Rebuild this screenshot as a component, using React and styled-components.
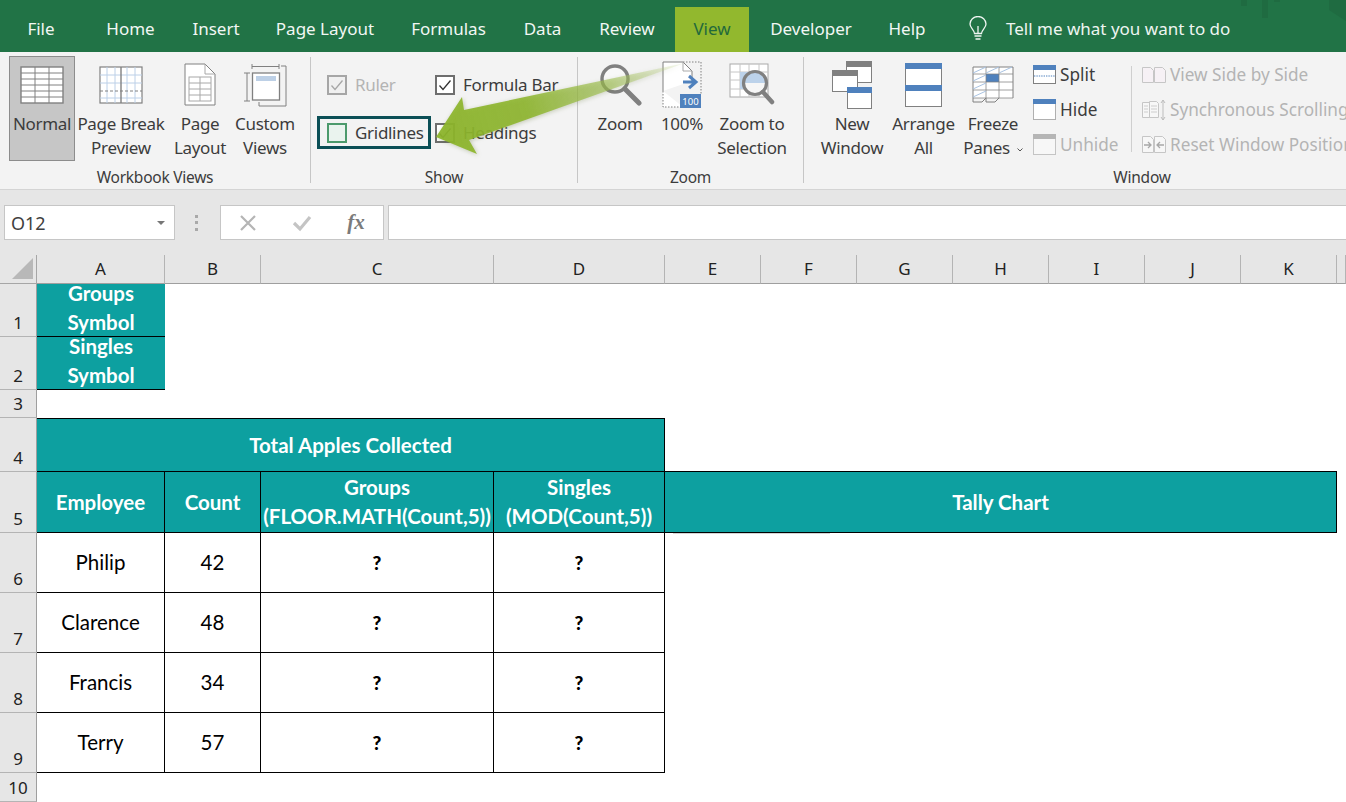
import styled, { createGlobalStyle } from "styled-components";

const GlobalStyle = createGlobalStyle`
  html, body {
    margin: 0;
    padding: 0;
    background: #fff;
  }
`;

const uiFont = `"Noto Sans", "Open Sans", sans-serif`;
const cellFont = `Lato, "Liberation Sans", sans-serif`;

const Page = styled.div`
  position: relative;
  width: 1346px;
  height: 802px;
  overflow: hidden;
  font-family: ${uiFont};
  background: #fff;
`;

/* tab strip */
const TabBar = styled.div`
  position: relative;
  display: flex;
  height: 52px;
  padding-top: 7px;
  box-sizing: border-box;
  background: #217346;
`;
const Tab = styled.div`
  width: ${(p) => p.$w}px;
  margin-left: ${(p) => p.$gap || 0}px;
  display: flex;
  align-items: center;
  justify-content: center;
  padding-bottom: 3px;
  font-size: 17px;
  color: ${(p) => (p.$active ? "#22693c" : "#f2f7f4")};
  background: ${(p) => (p.$active ? "#92b82e" : "transparent")};
`;
const TellMe = styled.div`
  display: flex;
  align-items: center;
  gap: 19px;
  margin-left: 28px;
  padding-bottom: 3px;
  font-size: 17px;
  color: #eef5f1;
`;
const Watermark = styled.svg`
  position: absolute;
  top: 0;
  right: 0;
`;

/* ribbon */
const Ribbon = styled.div`
  display: flex;
  height: 138px;
  box-sizing: border-box;
  overflow: hidden;
  background: #f3f3f3;
  border-bottom: 1px solid #d4d4d4;
`;
const Group = styled.section`
  flex: 0 0 ${(p) => p.$w}px;
  display: flex;
  flex-direction: column;
`;
const GroupBody = styled.div`
  height: 113px;
  box-sizing: border-box;
  padding: 4px 0 0 ${(p) => p.$pad || 0}px;
  display: flex;
`;
const GroupLabel = styled.div`
  text-align: center;
  font-size: 15.5px;
  line-height: 24px;
  letter-spacing: -0.25px;
  color: #3c3c3c;
`;
const Divider = styled.div`
  flex: 0 0 1px;
  margin: 5px 0 6px;
  background: #c6c6c6;
`;
const BigButton = styled.div`
  width: ${(p) => p.$w}px;
  height: 105px;
  box-sizing: border-box;
  display: flex;
  flex-direction: column;
  align-items: center;
  background: ${(p) => (p.$selected ? "#c6c6c6" : "transparent")};
  border: 1px solid ${(p) => (p.$selected ? "#8c8c8c" : "transparent")};
`;
const IconSlot = styled.div`
  height: 55px;
  flex: none;
  display: flex;
  align-items: center;
  justify-content: center;
`;
const BigLabel = styled.div`
  font-size: 17px;
  line-height: 24px;
  letter-spacing: -0.3px;
  text-align: center;
  white-space: pre-line;
  color: #3c3c3c;
`;
const Chevron = styled.svg`
  margin-left: 7px;
  vertical-align: 2px;
`;

/* show group */
const ShowGrid = styled.div`
  display: grid;
  grid-template-columns: 108px auto;
  grid-auto-rows: 33px;
  row-gap: 15px;
  padding: 12px 0 0 6px;
`;
const CheckItem = styled.div`
  display: flex;
  align-items: center;
  gap: 8px;
  width: 114px;
  height: 33px;
  box-sizing: border-box;
  padding-left: 7px;
  white-space: nowrap;
  border: 3px solid ${(p) => (p.$marked ? "#0b4f56" : "transparent")};
  font-size: 17px;
  letter-spacing: -0.3px;
  color: ${(p) => (p.$muted ? "#b4b4b4" : "#3c3c3c")};
`;
const Box = styled.span`
  flex: none;
  width: 20px;
  height: 20px;
  box-sizing: border-box;
  display: flex;
  align-items: center;
  justify-content: center;
  border: 2px solid ${(p) => p.$line};
  background: ${(p) => p.$fill};
`;

/* small window commands */
const SmallColumn = styled.div`
  flex: 0 0 ${(p) => p.$w}px;
  margin-left: ${(p) => p.$gap}px;
  display: grid;
  grid-auto-rows: 35px;
  padding-top: 1px;
`;
const SmallItem = styled.div`
  display: flex;
  align-items: center;
  gap: ${(p) => p.$gap}px;
  white-space: nowrap;
  font-size: 17.2px;
  color: ${(p) => (p.$muted ? "#b4b4b4" : "#3c3c3c")};
`;
const ThinRule = styled.div`
  flex: 0 0 1px;
  height: 86px;
  margin: 10px 0 0 0;
  background: #cfcfcf;
`;

/* formula bar */
const FormulaRow = styled.div`
  display: flex;
  align-items: center;
  height: 65px;
  padding: 0 0 0 4px;
  background: #e6e6e6;
`;
const NameBox = styled.div`
  width: 171px;
  height: 35px;
  box-sizing: border-box;
  padding: 0 9px 0 6px;
  display: flex;
  align-items: center;
  justify-content: space-between;
  background: #fff;
  border: 1px solid #c6c6c6;
  font-size: 18px;
  color: #3f3f3f;
`;
const Caret = styled.span`
  width: 0;
  height: 0;
  border-left: 4px solid transparent;
  border-right: 4px solid transparent;
  border-top: 4px solid #777;
`;
const Grip = styled.div`
  width: 3px;
  margin: 0 22px 0 20px;
  height: 16px;
  background: repeating-linear-gradient(#a9a9a9 0 3px, transparent 3px 6.5px);
`;
const FxBox = styled.div`
  width: 164px;
  height: 35px;
  box-sizing: border-box;
  display: grid;
  grid-template-columns: 54px 54px 54px;
  padding-left: 0;
  place-items: center;
  background: #fff;
  border: 1px solid #c6c6c6;
`;
const FxLabel = styled.span`
  font-family: "Liberation Serif", serif;
  font-style: italic;
  font-weight: bold;
  font-size: 21px;
  color: #7b7b7b;
`;
const FormulaInput = styled.div`
  flex: 1;
  height: 35px;
  box-sizing: border-box;
  margin-left: 4px;
  background: #fff;
  border: 1px solid #c6c6c6;
  border-right: none;
`;

/* sheet */
const Sheet = styled.div`
  display: grid;
  grid-template-columns: 37px 128px 96px 233px 171px repeat(7, 96px) 1fr;
  grid-template-rows: 29px 53px 53px 28px 54px 61px 60px 60px 60px 60px 29px;
`;
const Corner = styled.div`
  background: #e6e6e6;
  border-right: 1px solid #a6a6a6;
  border-bottom: 1px solid #a6a6a6;
  box-sizing: border-box;
  display: flex;
  align-items: flex-end;
  justify-content: flex-end;
  padding: 0 3px 4px 0;
`;
const ColHead = styled.div`
  box-sizing: border-box;
  display: flex;
  align-items: center;
  justify-content: center;
  padding-bottom: 1px;
  background: #e6e6e6;
  border-right: 1px solid #b4b4b4;
  border-bottom: 1px solid #9f9f9f;
  font-size: 17px;
  color: #222;
`;
const RowHead = styled.div`
  grid-column: 1;
  grid-row: ${(p) => p.$row};
  box-sizing: border-box;
  display: flex;
  align-items: flex-end;
  justify-content: center;
  background: #e6e6e6;
  border-right: 1px solid #9f9f9f;
  border-bottom: 1px solid #b4b4b4;
  font-size: 17px;
  line-height: 27px;
  color: #222;
`;
const Cell = styled.div`
  position: relative;
  grid-column: ${(p) => p.$col};
  grid-row: ${(p) => p.$row};
  box-sizing: border-box;
  display: flex;
  align-items: center;
  justify-content: center;
  text-align: center;
  white-space: pre-line;
  font-family: ${cellFont};
  font-size: 20.5px;
  line-height: 29px;
  color: #000;
  border-right: 1px solid #000;
  border-bottom: 1px solid #000;
`;
const HeadCell = styled(Cell)`
  background: #0da0a0;
  color: #fff;
  font-weight: bold;
  border-top: ${(p) => (p.$top ? "1px solid #000" : "none")};
`;
const TallyCell = styled(HeadCell)`
  margin-top: -1px;
  border-top: 1px solid #000;
`;
const LegendCell = styled(HeadCell)`
  padding-bottom: 4px;
  border-right: none;
`;
const QueryCell = styled(Cell)`
  font-weight: 900;
  font-size: 19px;
`;
const SmudgeLine = styled.div`
  position: absolute;
  top: calc(100% + 1px);
  left: 8px;
  width: 157px;
  height: 1px;
  background: #d4d4d4;
`;

const ArrowLayer = styled.svg`
  position: absolute;
  left: 430px;
  top: 55px;
  pointer-events: none;
  filter: drop-shadow(1px 1px 2px rgba(90, 110, 40, 0.35));
`;

const grey = "#808080";
const blue = "#4f81bd";

function NormalIcon() {
  const v = [15, 29];
  const h = [7, 13, 19, 25, 31];
  return (
    <svg width="44" height="38" viewBox="0 0 44 38">
      <rect x="1" y="1" width="42" height="36" fill="#fff" stroke={grey} strokeWidth="1.4" />
      {v.map((x) => <path key={x} d={`M${x} 1v36`} stroke={grey} />)}
      {h.map((y) => <path key={y} d={`M1 ${y}h42`} stroke={grey} />)}
    </svg>
  );
}

function PageBreakIcon() {
  return (
    <svg width="44" height="38" viewBox="0 0 44 38">
      <rect x="1" y="1" width="42" height="36" fill="#fff" stroke={grey} strokeWidth="1.2" />
      <path d="M8 1v36M16 1v36M28 1v36M36 1v36M1 9h42M1 17h42M1 32h42" stroke="#bcd0e8" />
      <path d="M22 1v36" stroke={grey} strokeWidth="1.4" />
      <path d="M1 25h42" stroke={grey} strokeDasharray="3 2" />
    </svg>
  );
}

function PageLayoutIcon() {
  return (
    <svg width="32" height="43" viewBox="0 0 32 43">
      <path d="M1 1h20l10 10v31H1z" fill="#fff" stroke={grey} />
      <path d="M21 1v10h10" fill="none" stroke="#a8a8a8" />
      <rect x="5" y="14" width="22" height="24" fill="#fff" stroke="#a8a8a8" />
      <path d="M16 14v24M5 20h22M5 26h22M5 32h22" stroke="#a8a8a8" />
    </svg>
  );
}

function CustomViewsIcon() {
  return (
    <svg width="44" height="44" viewBox="0 0 44 44">
      <path d="M9 1v5M36 1v5M9 3.500h27" stroke={grey} fill="none" />
      <path d="M38 3h5v40H16v-4" stroke={grey} fill="none" />
      <path d="M1 10h6M4 10v28M1 38h6" stroke={grey} fill="none" />
      <rect x="9.500" y="10" width="27" height="27" fill="#fff" stroke={grey} strokeWidth="1.3" />
      <rect x="13" y="13" width="20" height="5" fill="#bdd0e6" />
    </svg>
  );
}

function MagnifierIcon() {
  return (
    <svg width="44" height="44" viewBox="0 0 44 44">
      <circle cx="17" cy="16" r="13" fill="#f8f8f8" stroke={grey} strokeWidth="3.4" />
      <path d="M27 26l14 14" stroke={grey} strokeWidth="5" strokeLinecap="round" />
    </svg>
  );
}

function HundredIcon() {
  return (
    <svg width="40" height="48" viewBox="0 0 40 48">
      <path d="M1 30V1h20l9 9v10" fill="#fff" stroke={grey} />
      <path d="M1 30v16h20" fill="#fff" stroke={grey} strokeDasharray="1.5 1.5" />
      <path d="M21 1h18v32" fill="none" stroke={grey} strokeDasharray="1.5 1.5" />
      <path d="M21 1v9h9" fill="none" stroke="#aaa" />
      <path d="M21 21h12M27 15l7 6-7 6" fill="none" stroke={blue} strokeWidth="3" />
      <rect x="18" y="33" width="21" height="14" fill={blue} />
      <text x="28.500" y="44" textAnchor="middle" fontSize="9.500" fontFamily="Noto Sans, sans-serif" fill="#fff">100</text>
    </svg>
  );
}

function ZoomSelectionIcon() {
  return (
    <svg width="46" height="44" viewBox="0 0 46 44">
      <rect x="1" y="1" width="38" height="33" fill="#fff" stroke="#a9a9a9" />
      <path d="M11 1v33M20 1v33M30 1v33M1 9h38M1 17h38M1 26h38" stroke="#c6c6c6" />
      <rect x="11" y="9" width="19" height="17" fill="#bcd2ea" />
      <circle cx="26" cy="20" r="11.500" fill="#f6f6f6" />
      <path d="M14.500 20a11.500 11.500 0 0 1 23 0z" fill="#bcd2ea" />
      <circle cx="26" cy="20" r="11.500" fill="none" stroke={grey} strokeWidth="3.2" />
      <path d="M34 29l9 10" stroke={grey} strokeWidth="4.500" strokeLinecap="round" />
    </svg>
  );
}

function Win({ x, y, w, h, bar }) {
  return (
    <g>
      <rect x={x + 0.5} y={y + 0.5} width={w} height={h} fill="#fff" stroke={grey} />
      <rect x={x} y={y} width={w + 1} height={6} fill={bar} />
    </g>
  );
}

function NewWindowIcon() {
  return (
    <svg width="42" height="48" viewBox="0 0 42 48">
      <Win x={15} y={0} w={25} h={21} bar={grey} />
      <Win x={1} y={9} w={25} h={21} bar={grey} />
      <Win x={16} y={26} w={24} h={21} bar={blue} />
    </svg>
  );
}

function ArrangeIcon() {
  return (
    <svg width="37" height="44" viewBox="0 0 37 44">
      <rect x="0.500" y="0.500" width="36" height="43" fill="#fff" stroke={grey} />
      <rect x="0" y="0" width="37" height="6" fill={blue} />
      <rect x="0" y="22" width="37" height="6" fill={blue} />
    </svg>
  );
}

function FreezeIcon() {
  return (
    <svg width="42" height="38" viewBox="0 0 42 38">
      <path d="M1 32V1h40v31" fill="#fff" stroke={grey} />
      <rect x="14" y="8" width="13" height="8" fill={blue} />
      <path d="M14 1v31M27 1v31M1 8h40M1 16h40M1 24h40M1 32h40" stroke={grey} strokeOpacity="0.75" />
      <path d="M1 7l13-6M14 7l13-6M27 7l13-6M1 15l13-6M1 23l13-6M1 31l13-6" stroke="#a9c3e2" />
      <path d="M1 32v4h9l4-4M14 32v4h9l4-4" fill="none" stroke={grey} />
    </svg>
  );
}

function SplitIcon() {
  return (
    <svg width="23" height="19" viewBox="0 0 23 19">
      <rect x="0.500" y="0.500" width="22" height="18" fill="#fff" stroke={grey} />
      <rect width="23" height="5" fill={blue} />
      <path d="M1 11h21" stroke={blue} strokeDasharray="1.4 1" />
    </svg>
  );
}

function HideIcon() {
  return (
    <svg width="23" height="21" viewBox="0 0 23 21">
      <rect x="0.500" y="0.500" width="22" height="20" fill="#fff" stroke="#666" strokeDasharray="1 1" />
      <rect width="23" height="5" fill={blue} />
    </svg>
  );
}

function UnhideIcon() {
  return (
    <svg width="23" height="21" viewBox="0 0 23 21">
      <rect x="0.500" y="0.500" width="22" height="20" fill="#f7f7f7" stroke="#c4c4c4" />
      <rect width="23" height="5" fill="#b5b5b5" />
    </svg>
  );
}

function SideBySideIcon() {
  return (
    <svg width="24" height="16" viewBox="0 0 24 16">
      <path d="M.5.5h8l3 3v12H.5zM12.500.5h8l3 3v12h-11z" fill="#f6f1f5" stroke="#c6c6c6" />
    </svg>
  );
}

function SyncScrollIcon() {
  return (
    <svg width="24" height="24" viewBox="0 0 24 24">
      <path d="M.5 4.500h7v15h-7zM7.500 3.500h7l2 2v14h-9z" fill="#f7f7f7" stroke="#c6c6c6" />
      <path d="M2 8h4M2 11h4M2 14h4M9 8h6M9 11h6M9 14h6" stroke="#cdcdcd" />
      <path d="M21 2v20M19 5l2-3 2 3M19 19l2 3 2-3" fill="none" stroke="#bdbdbd" />
    </svg>
  );
}

function ResetWindowIcon() {
  return (
    <svg width="24" height="17" viewBox="0 0 24 17">
      <path d="M.5.5h8l3 3v13H.5zM12.500.5h8l3 3v13h-11z" fill="#f7f7f7" stroke="#c6c6c6" />
      <path d="M2 9h7M6 6l3 3-3 3M22 9h-7M18 6l-3 3 3 3" fill="none" stroke="#a8a8a8" strokeWidth="1.3" />
    </svg>
  );
}

function Tick({ color }) {
  return (
    <svg width="14" height="12" viewBox="0 0 14 12">
      <path d="M1.500 6.500l3.500 4 7.500-9" fill="none" stroke={color} strokeWidth="1.3" />
    </svg>
  );
}

function Bulb() {
  return (
    <svg width="18" height="25" viewBox="0 0 18 25" fill="none" stroke="#eef5f1" strokeWidth="1.3">
      <path d="M5.500 17.500C5 13.500 1 12 1 8a8 7.500 0 0 1 16 0c0 4-4 5.500-4.500 9.500z" />
      <path d="M9 17V10M5.500 20h7M6.500 23h5" />
    </svg>
  );
}

const tabs = [
  ["File", 82],
  ["Home", 97],
  ["Insert", 74],
  ["Page Layout", 144],
  ["Formulas", 103],
  ["Data", 85],
  ["Review", 84],
];
const columns = ["A", "B", "C", "D", "E", "F", "G", "H", "I", "J", "K", ""];
const employees = [
  ["Philip", 42],
  ["Clarence", 48],
  ["Francis", 34],
  ["Terry", 57],
];

function App() {
  return (
    <Page>
      <GlobalStyle />
      <TabBar>
        {tabs.map(([name, w]) => (
          <Tab key={name} $w={w}>{name}</Tab>
        ))}
        <Tab $w={74} $gap={6} $active>View</Tab>
        <Tab $w={124}>Developer</Tab>
        <Tab $w={68}>Help</Tab>
        <TellMe>
          <Bulb />
          Tell me what you want to do
        </TellMe>
        <Watermark width="106" height="22" viewBox="0 0 106 22" fill="#1f6b41">
          <path d="M1 0h6v6H1zM22 0h6v18h-6zM34 0h6v2h-6zM89 0h17v21l-17-11z" />
        </Watermark>
      </TabBar>

      <Ribbon>
        <Group $w={310}>
          <GroupBody $pad={9}>
            <BigButton $w={66} $selected>
              <IconSlot><NormalIcon /></IconSlot>
              <BigLabel>Normal</BigLabel>
            </BigButton>
            <BigButton $w={92}>
              <IconSlot><PageBreakIcon /></IconSlot>
              <BigLabel>{"Page Break\nPreview"}</BigLabel>
            </BigButton>
            <BigButton $w={66}>
              <IconSlot><PageLayoutIcon /></IconSlot>
              <BigLabel>{"Page\nLayout"}</BigLabel>
            </BigButton>
            <BigButton $w={64}>
              <IconSlot><CustomViewsIcon /></IconSlot>
              <BigLabel>{"Custom\nViews"}</BigLabel>
            </BigButton>
          </GroupBody>
          <GroupLabel>Workbook Views</GroupLabel>
        </Group>
        <Divider />

        <Group $w={266}>
          <GroupBody>
            <ShowGrid>
              <CheckItem $muted>
                <Box $line="#a6a6a6" $fill="#f0f0f0"><Tick color="#a6a6a6" /></Box>
                Ruler
              </CheckItem>
              <CheckItem>
                <Box $line="#6e6e6e" $fill="#fff"><Tick color="#333" /></Box>
                Formula Bar
              </CheckItem>
              <CheckItem $marked>
                <Box $line="#4c9a6c" $fill="#eaf3ee" />
                Gridlines
              </CheckItem>
              <CheckItem>
                <Box $line="#6e6e6e" $fill="#fff"><Tick color="#333" /></Box>
                Headings
              </CheckItem>
            </ShowGrid>
          </GroupBody>
          <GroupLabel>Show</GroupLabel>
        </Group>
        <Divider />

        <Group $w={225}>
          <GroupBody $pad={12}>
            <BigButton $w={60}>
              <IconSlot><MagnifierIcon /></IconSlot>
              <BigLabel>Zoom</BigLabel>
            </BigButton>
            <BigButton $w={64}>
              <IconSlot><HundredIcon /></IconSlot>
              <BigLabel>100%</BigLabel>
            </BigButton>
            <BigButton $w={76}>
              <IconSlot><ZoomSelectionIcon /></IconSlot>
              <BigLabel>{"Zoom to\nSelection"}</BigLabel>
            </BigButton>
          </GroupBody>
          <GroupLabel>Zoom</GroupLabel>
        </Group>
        <Divider />

        <Group $w={676}>
          <GroupBody $pad={15}>
            <BigButton $w={66}>
              <IconSlot><NewWindowIcon /></IconSlot>
              <BigLabel>{"New\nWindow"}</BigLabel>
            </BigButton>
            <BigButton $w={77}>
              <IconSlot><ArrangeIcon /></IconSlot>
              <BigLabel>{"Arrange\nAll"}</BigLabel>
            </BigButton>
            <BigButton $w={62}>
              <IconSlot><FreezeIcon /></IconSlot>
              <BigLabel>
                Freeze
                <br />
                Panes
                <Chevron width="6" height="4" viewBox="0 0 6 4">
                  <path d="M.5.5L3 3 5.500.5" fill="none" stroke="#555" />
                </Chevron>
              </BigLabel>
            </BigButton>
            <SmallColumn $w={98} $gap={9}>
              <SmallItem $gap={4}><SplitIcon />Split</SmallItem>
              <SmallItem $gap={4}><HideIcon />Hide</SmallItem>
              <SmallItem $gap={4} $muted><UnhideIcon />Unhide</SmallItem>
            </SmallColumn>
            <ThinRule />
            <SmallColumn $w={300} $gap={10}>
              <SmallItem $gap={4} $muted><SideBySideIcon />View Side by Side</SmallItem>
              <SmallItem $gap={4} $muted><SyncScrollIcon />Synchronous Scrolling</SmallItem>
              <SmallItem $gap={4} $muted><ResetWindowIcon />Reset Window Position</SmallItem>
            </SmallColumn>
          </GroupBody>
          <GroupLabel>Window</GroupLabel>
        </Group>
      </Ribbon>

      <FormulaRow>
        <NameBox>
          O12
          <Caret />
        </NameBox>
        <Grip />
        <FxBox>
          <svg width="18" height="18" viewBox="0 0 18 18">
            <path d="M2 2l14 14M16 2L2 16" stroke="#b5b5b5" strokeWidth="2.2" />
          </svg>
          <svg width="20" height="18" viewBox="0 0 20 18">
            <path d="M2 9l6 6L18 3" fill="none" stroke="#c4c4c4" strokeWidth="3.2" />
          </svg>
          <FxLabel>fx</FxLabel>
        </FxBox>
        <FormulaInput />
      </FormulaRow>

      <Sheet>
        <Corner>
          <svg width="21" height="21" viewBox="0 0 21 21">
            <path d="M21 0v21H0z" fill="#b8b8b8" />
          </svg>
        </Corner>
        {columns.map((c, i) => (
          <ColHead key={i}>{c}</ColHead>
        ))}
        {[1, 2, 3, 4, 5, 6, 7, 8, 9, 10].map((n) => (
          <RowHead key={n} $row={n + 1}>{n}</RowHead>
        ))}

        <LegendCell $col="2" $row="2">{"Groups\nSymbol"}</LegendCell>
        <LegendCell $col="2" $row="3">{"Singles\nSymbol"}</LegendCell>

        <HeadCell $col="2 / 6" $row="5" $top>Total Apples Collected</HeadCell>
        <HeadCell $col="2" $row="6">Employee</HeadCell>
        <HeadCell $col="3" $row="6">Count</HeadCell>
        <HeadCell $col="4" $row="6">{"Groups\n(FLOOR.MATH(Count,5))"}</HeadCell>
        <HeadCell $col="5" $row="6">{"Singles\n(MOD(Count,5))"}</HeadCell>
        <TallyCell $col="6 / 13" $row="6">
          Tally Chart
          <SmudgeLine />
        </TallyCell>

        {employees.map(([name], i) => (
          <Cell key={name} $col="2" $row={i + 7}>{name}</Cell>
        ))}
        {employees.map(([name, count], i) => (
          <Cell key={name} $col="3" $row={i + 7}>{count}</Cell>
        ))}
        {employees.map(([name], i) => (
          <QueryCell key={name} $col="4" $row={i + 7}>?</QueryCell>
        ))}
        {employees.map(([name], i) => (
          <QueryCell key={name} $col="5" $row={i + 7}>?</QueryCell>
        ))}
      </Sheet>

      <ArrowLayer width="270" height="105" viewBox="430 55 270 105">
        <defs>
          <linearGradient id="arrowFade" gradientUnits="userSpaceOnUse" x1="440" y1="130" x2="685" y2="63">
            <stop offset="0" stopColor="#8db52c" stopOpacity="0.94" />
            <stop offset="0.35" stopColor="#8db52c" stopOpacity="0.88" />
            <stop offset="0.7" stopColor="#9dbe4e" stopOpacity="0.6" />
            <stop offset="1" stopColor="#c3d58f" stopOpacity="0.15" />
          </linearGradient>
        </defs>
        <path d="M685 63L464 110l-2-13-26 40 41 17-8-14z" fill="url(#arrowFade)" />
      </ArrowLayer>
    </Page>
  );
}

export default App;
